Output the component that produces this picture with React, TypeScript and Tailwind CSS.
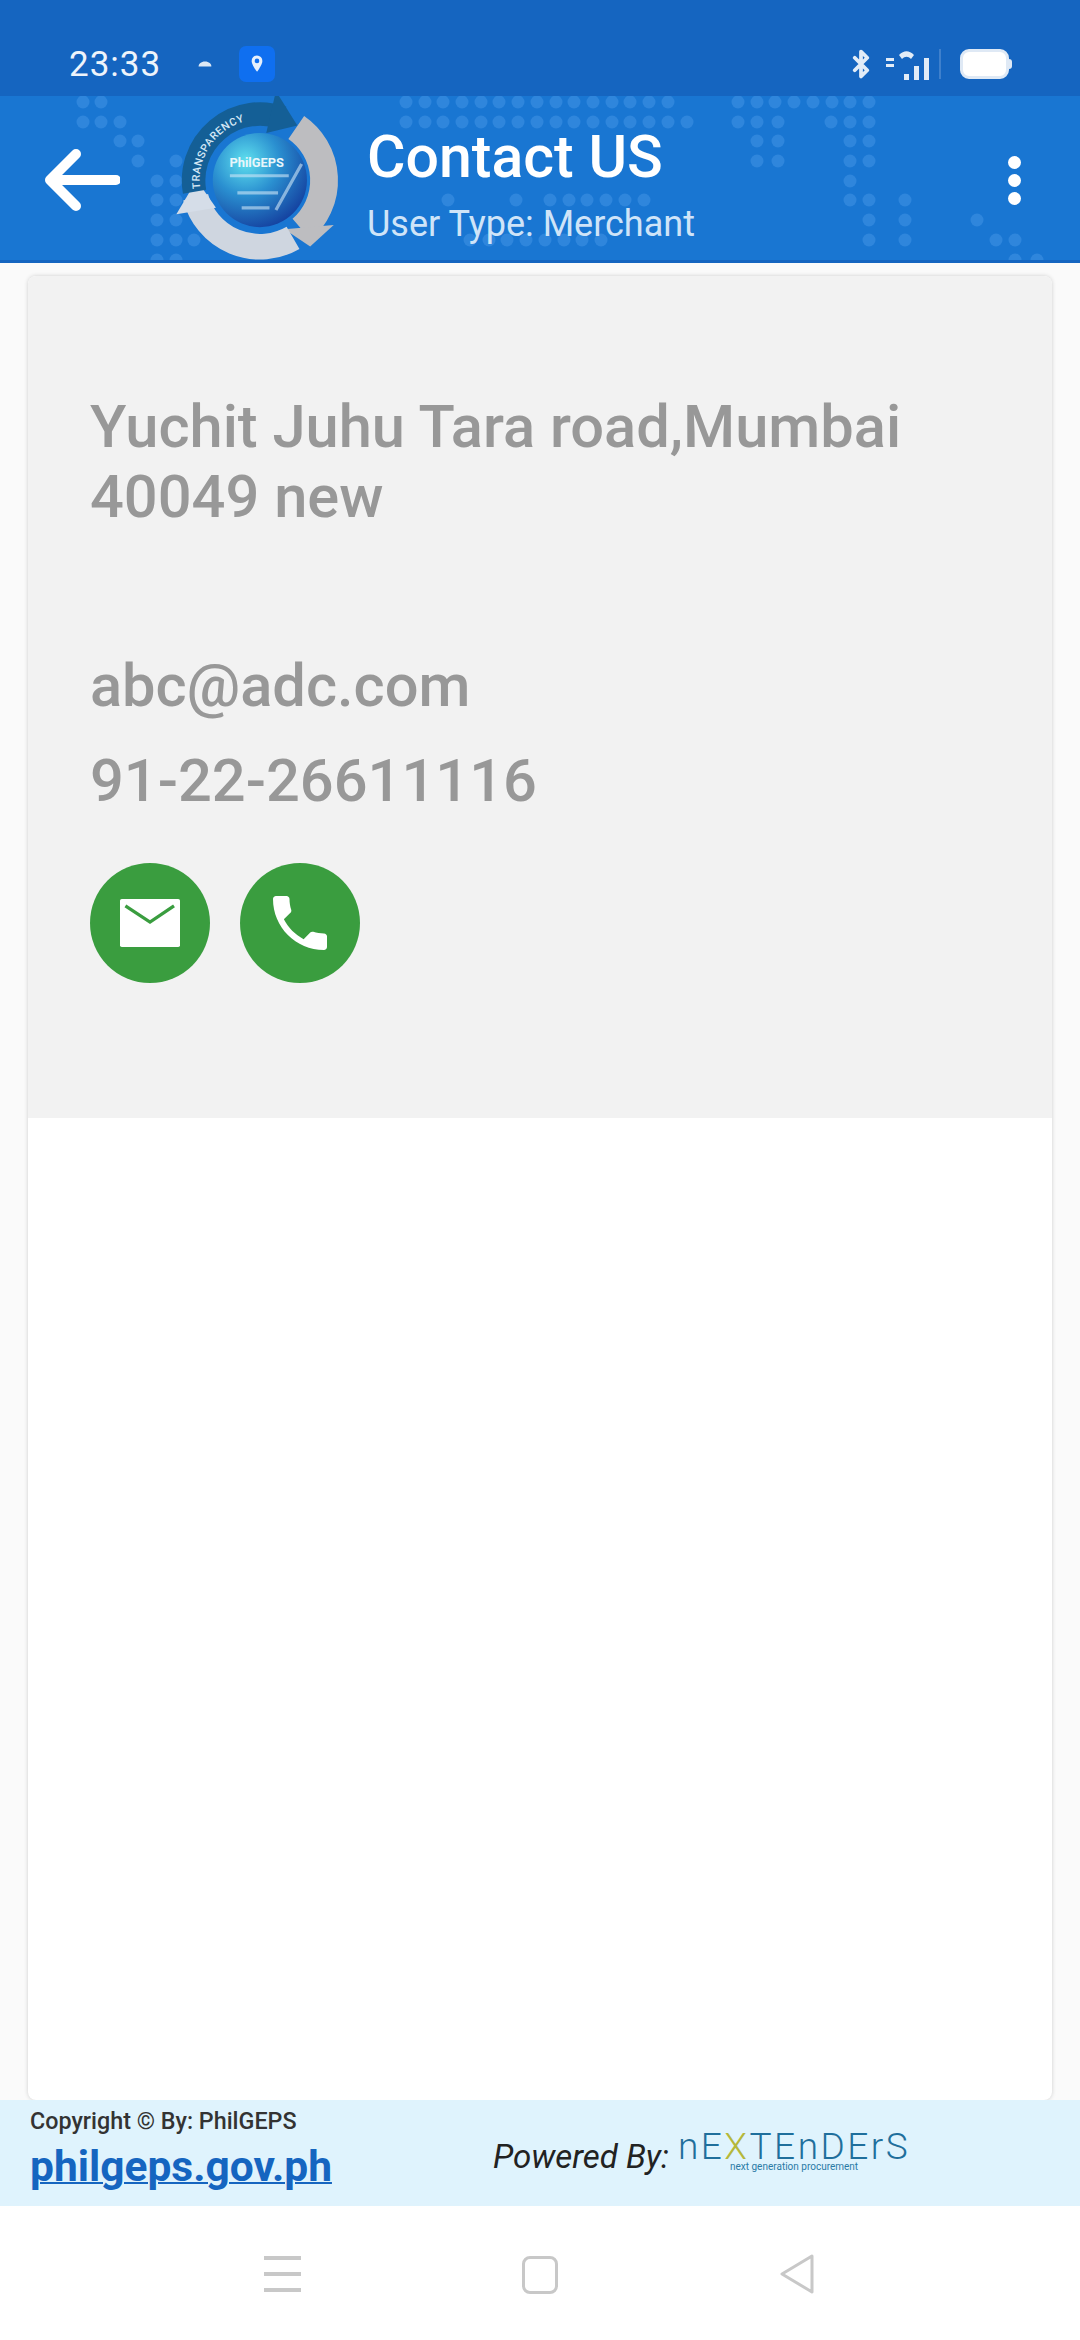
import { Bluetooth } from 'lucide-react';

const range = (from: number, to: number, step = 18.7) => {
  const out: number[] = [];
  for (let x = from; x <= to; x += step) out.push(Math.round(x));
  return out;
};

// world-map dot pattern behind the app bar (page coordinates)
const dotRows: [number, number[]][] = [
  [102, [83, 101, ...range(406, 672), ...range(738, 869)]],
  [122, [83, 101, 120, ...range(406, 688), 738, 757, 778, 831, 850, 869]],
  [141, [120, 138, 757, 778, 850, 869]],
  [161, [138, 176, 757, 778, 850, 869]],
  [181, [157, 176, 850]],
  [200, [157, 176, 448, 516, ...range(550, 654), 850, 869, 905]],
  [220, [157, 176, 869, 905, 977]],
  [240, [157, 176, 194, ...range(470, 609), 869, 905, 996, 1015]],
  [260, [157, 176, 1015, 1037]],
];

function HeaderDots() {
  return (
    <svg className="absolute left-0 top-0" width="1080" height="167" viewBox="0 96 1080 167">
      {dotRows.map(([y, xs]) =>
        xs.map((x) => <circle key={`${x}-${y}`} cx={x} cy={y} r="6.5" fill="#2f86dc" />)
      )}
    </svg>
  );
}

function Logo() {
  return (
    <svg className="absolute left-[171px] -top-[6px]" width="182" height="179" viewBox="170 96 170 167">
      <defs>
        <radialGradient id="globe" cx="35%" cy="30%" r="80%">
          <stop offset="0%" stopColor="#5fe0ee" />
          <stop offset="45%" stopColor="#2a8fd0" />
          <stop offset="100%" stopColor="#12389a" />
        </radialGradient>
        <path id="topArc" d="M 198 192 A 57 57 0 0 1 274 127" fill="none" />
      </defs>
      <circle cx="253" cy="180" r="44" fill="url(#globe)" />
      <path d="M 225 176 L 280 176 M 232 192 L 270 192 M 236 206 L 262 206 M 268 208 L 292 165" stroke="#cfe6f7" strokeWidth="3" opacity="0.6" fill="none" />
      <text x="250" y="168" textAnchor="middle" fontSize="12" fontWeight="700" fill="#e8f6fb" fontFamily="Roboto, sans-serif">PhilGEPS</text>
      {/* gray arc, right */}
      <path d="M 287 131 A 60 60 0 0 1 292 226" fill="none" stroke="#bdbdc0" strokeWidth="26" />
      <polygon points="276,226 322,222 300,242" fill="#bdbdc0" />
      {/* light arc, bottom */}
      <path d="M 284 234 A 62 62 0 0 1 193 196" fill="none" stroke="#cfd6e0" strokeWidth="24" />
      <polygon points="175,212 194,180 212,206" fill="#d5dde8" />
      {/* blue arc, top */}
      <path d="M 192 191 A 62 62 0 0 1 274 122" fill="none" stroke="#145f96" strokeWidth="22" />
      <polygon points="268,97 288,129 259,136" fill="#145f96" />
      <text fontSize="10" fontWeight="500" fill="#d5e8f5" fontFamily="Roboto, sans-serif" letterSpacing="0.5">
        <textPath href="#topArc" startOffset="4">TRANSPARENCY</textPath>
      </text>
    </svg>
  );
}

function StatusBar() {
  return (
    <div className="h-[96px] shrink-0 bg-[#1565c0] flex items-center pl-[69px] pr-[68px] pt-[32px] text-[#eef4fb]">
      <span className="text-[35px] leading-none tracking-[1px]" style={{ fontFamily: 'Roboto, sans-serif' }}>23:33</span>
      <svg className="ml-[36px]" width="16" height="12" viewBox="0 0 20 14">
        <path d="M2 10c0-3 3-6 8-6s8 3 8 6z" fill="#dce8f5" />
      </svg>
      <div className="ml-[26px] w-[36px] h-[36px] rounded-[7px] bg-[#0f6ff0] flex items-center justify-center">
        <svg width="14" height="20" viewBox="0 0 18 26">
          <path d="M9 2a7 7 0 0 0-7 7c0 5 7 14 7 14s7-9 7-14a7 7 0 0 0-7-7z" fill="#e6f0fc" />
          <circle cx="9" cy="9" r="3" fill="#0f6ff0" />
        </svg>
      </div>
      <div className="ml-auto flex items-center">
        <Bluetooth size={30} strokeWidth={3} color="#e2ecf7" />
        <svg className="ml-[9px]" width="48" height="34" viewBox="0 0 48 34">
          <rect x="1" y="11" width="8" height="3" fill="#e2ecf7" />
          <rect x="1" y="17" width="8" height="3" fill="#e2ecf7" />
          <path d="M14 8c5-5 10-5 15 0l-3 4c-3-3-6-3-9 0z" fill="#e2ecf7" />
          <rect x="19" y="27" width="5" height="6" fill="#e2ecf7" />
          <rect x="29" y="19" width="5" height="14" fill="#e2ecf7" />
          <rect x="39" y="11" width="5" height="22" fill="#e2ecf7" />
        </svg>
        <div className="ml-[6px] w-[2px] h-[30px] bg-[#3f80cc]" />
        <div className="ml-[19px] w-[49px] h-[30px] rounded-[9px] border-[3px] border-[#dfe9f5] bg-white" />
        <div className="w-[3px] h-[10px] bg-[#dfe9f5] rounded-r" />
      </div>
    </div>
  );
}

function AppBar() {
  return (
    <div className="relative h-[167px] shrink-0 bg-[#1976d2] border-b-[3px] border-[#1565c0] overflow-hidden">
      <HeaderDots />
      <Logo />
      <div className="relative h-full flex items-center">
        <svg className="ml-[44px] mt-[4px]" width="76" height="64" viewBox="0 0 76 64">
          <path d="M72 32H8M32 6L6 32l26 26" fill="none" stroke="white" strokeWidth="10" strokeLinecap="round" strokeLinejoin="round" />
        </svg>
        <div className="ml-[247px] mt-[13px] flex flex-col gap-[15px] text-white" style={{ fontFamily: 'Roboto, sans-serif' }}>
          <span className="text-[59px] leading-[64px] font-medium">Contact US</span>
          <span className="text-[36px] leading-[40px] text-[#cfe4f8]">User Type: Merchant</span>
        </div>
        <div className="ml-auto mr-[59px] mt-[4px] flex flex-col gap-[5px]">
          <span className="w-[13px] h-[13px] rounded-full bg-white" />
          <span className="w-[13px] h-[13px] rounded-full bg-white" />
          <span className="w-[13px] h-[13px] rounded-full bg-white" />
        </div>
      </div>
    </div>
  );
}

function ContactCard() {
  return (
    <div className="flex-1 mx-[28px] mt-[13px] rounded-[8px] bg-white shadow-[0_0_4px_rgba(0,0,0,0.18)] overflow-hidden">
      <div className="h-[842px] bg-[#f2f2f2] pl-[62px] pt-[116px] text-[#989898] text-[59.6px] leading-[70px] font-medium" style={{ fontFamily: 'Roboto, sans-serif' }}>
        <p>Yuchit Juhu Tara road,Mumbai<br />40049 new</p>
        <p className="mt-[119px]">abc@adc.com</p>
        <p className="mt-[25px]">91-22-26611116</p>
        <div className="mt-[47px] flex gap-[30px]">
          <div className="w-[120px] h-[120px] rounded-full bg-[#3a9d3f] flex items-center justify-center">
            <svg width="72" height="72" viewBox="0 0 24 24">
              <rect x="2" y="4" width="20" height="16" rx="0.6" fill="white" />
              <path d="M3.8 6.3L12 11.7l8-5.4" fill="none" stroke="#3a9d3f" strokeWidth="1.1" />
            </svg>
          </div>
          <div className="w-[120px] h-[120px] rounded-full bg-[#3a9d3f] flex items-center justify-center">
            <svg width="72" height="72" viewBox="0 0 24 24" fill="white">
              <path d="M6.62 10.79c1.44 2.83 3.76 5.14 6.59 6.59l2.2-2.2c.27-.27.67-.36 1.02-.24 1.12.37 2.33.57 3.57.57.55 0 1 .45 1 1V20c0 .55-.45 1-1 1-9.39 0-17-7.61-17-17 0-.55.45-1 1-1h3.5c.55 0 1 .45 1 1 0 1.25.2 2.45.57 3.57.11.35.03.74-.25 1.02l-2.2 2.2z" />
            </svg>
          </div>
        </div>
      </div>
    </div>
  );
}

function Footer() {
  return (
    <div className="h-[106px] shrink-0 bg-[#dff3fd] flex pl-[30px]" style={{ fontFamily: 'Roboto, sans-serif' }}>
      <div className="w-[463px] shrink-0 flex flex-col">
        <span className="mt-[8px] text-[23.3px] leading-[26px] text-[#333] font-medium">Copyright © By: PhilGEPS</span>
        <a className="mt-[11px] text-[42.5px] leading-[44px] font-bold text-[#1565c0] underline decoration-2">philgeps.gov.ph</a>
      </div>
      <span className="mt-[39px] text-[33px] leading-[36px] italic text-[#222]">Powered By:</span>
      <div className="ml-[9px] mt-[32px] flex flex-col items-center">
        <span className="text-[37px] leading-[30px] font-light tracking-[2.5px] text-[#1f6f9c]">
          nE<span className="text-[#b5b83a]">X</span>TEnDErS
        </span>
        <span className="text-[10px] leading-[10px] text-[#2a7aa5]">next generation procurement</span>
      </div>
    </div>
  );
}

function NavBar() {
  return (
    <div className="h-[134px] shrink-0 bg-white flex items-start pt-[50px] pl-[264px]">
      <div className="w-[37px] h-[36px] flex flex-col justify-between">
        <span className="h-[4px] bg-[#c8c8c8]" />
        <span className="h-[4px] bg-[#c8c8c8]" />
        <span className="h-[4px] bg-[#c8c8c8]" />
      </div>
      <div className="ml-[221px] w-[36px] h-[38px] rounded-[8px] border-[3px] border-[#c8c8c8]" />
      <svg className="ml-[221px] -mt-[3px]" width="36" height="42" viewBox="0 0 36 42">
        <path d="M33 3 L3 21 L33 39 Z" fill="none" stroke="#c8c8c8" strokeWidth="3" strokeLinejoin="round" />
      </svg>
    </div>
  );
}

export default function App() {
  return (
    <div className="w-[1080px] h-[2340px] flex flex-col bg-[#fafafa] overflow-hidden">
      <StatusBar />
      <AppBar />
      <ContactCard />
      <Footer />
      <NavBar />
    </div>
  );
}
